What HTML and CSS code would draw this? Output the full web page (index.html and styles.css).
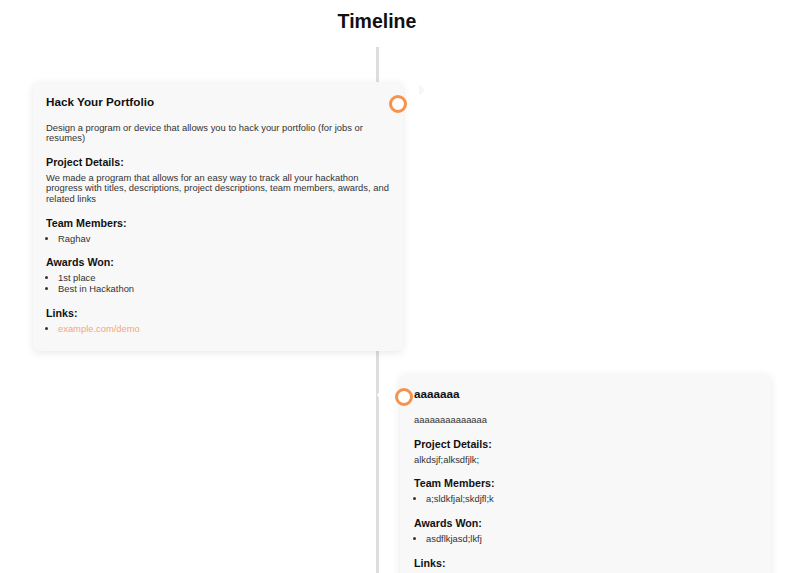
FILE: index.html
```html
<!DOCTYPE html>
<html lang="en">
<head>
  <meta charset="UTF-8">
  <title>Timeline</title>
  <meta name="viewport" content="width=device-width, initial-scale=1.0">
  <link rel="stylesheet" href="styles.css">
</head>
<body>

<h1 class="page-title">Timeline</h1>

<div class="timeline">

  <div class="entry left">
    <span class="dot"></span>
    <h3 class="entry-title">Hack Your Portfolio</h3>
    <p class="entry-desc">Design a program or device that allows you to hack your portfolio (for jobs or resumes)</p>

    <h4>Project Details:</h4>
    <p>We made a program that allows for an easy way to track all your hackathon progress with titles, descriptions, project descriptions, team members, awards, and related links</p>

    <h4>Team Members:</h4>
    <ul>
      <li>Raghav</li>
    </ul>

    <h4>Awards Won:</h4>
    <ul>
      <li>1st place</li>
      <li>Best in Hackathon</li>
    </ul>

    <h4>Links:</h4>
    <ul>
      <li><a href="#">example.com/demo</a></li>
    </ul>
  </div>

  <div class="entry right">
    <span class="dot"></span>
    <h3 class="entry-title">aaaaaaa</h3>
    <p class="entry-desc">aaaaaaaaaaaaaa</p>

    <h4>Project Details:</h4>
    <p>alkdsjf;alksdfjlk;</p>

    <h4>Team Members:</h4>
    <ul>
      <li>a;sldkfjal;skdjfl;k</li>
    </ul>

    <h4>Awards Won:</h4>
    <ul>
      <li>asdflkjasd;lkfj</li>
    </ul>

    <h4>Links:</h4>
    <ul>
      <li><a href="#">example.com/demo</a></li>
    </ul>
  </div>

</div>

</body>
</html>
```

FILE: styles.css
```css
body {
  margin: 0;
  font-family: "Liberation Sans", Arial, sans-serif;
  background: #fff;
  color: #222;
}

.page-title {
  width: 754px;
  margin: 0;
  padding-top: 9px;
  text-align: center;
  font-size: 19.5px;
  line-height: 24px;
  color: #111;
}

.timeline {
  position: relative;
  padding-top: 49px;
  padding-bottom: 40px;
}

/* the vertical rail */
.timeline::before {
  content: "";
  position: absolute;
  top: 14px;
  bottom: 0;
  left: 376px;
  width: 3px;
  background: #ddd;
}

.entry {
  position: relative;
  box-sizing: border-box;
  background: #f8f8f8;
  border-radius: 6px;
  box-shadow: 0 2px 8px rgba(0,0,0,0.09);
  padding: 13px 14px 17px 13px;
}

.entry.left {
  width: 370px;
  margin-left: 33px;
  margin-bottom: 23px;
}

.entry.right {
  width: 371px;
  margin-left: 400px;
  padding-left: 14px;
}

/* little pointers next to each card */
.entry.left::after {
  content: "";
  position: absolute;
  top: 2px;
  right: -28px;
  border: 6px solid transparent;
  border-left: 6px solid #f6f6f6;
}

.entry.right::after {
  content: "";
  position: absolute;
  top: 16px;
  left: -28px;
  border: 5px solid transparent;
  border-right: 4px solid #fff;
}

.dot {
  position: absolute;
  width: 12px;
  height: 12px;
  border: 3px solid #f5924c;
  border-radius: 50%;
  background: #fff;
}

.entry.left .dot {
  top: 13px;
  right: -4px;
}

.entry.right .dot {
  top: 14px;
  left: -5px;
}

.entry-title {
  margin: 0;
  font-size: 11.7px;
  line-height: 14px;
  color: #111;
}

.entry-desc {
  margin-top: 13.5px;
}

h4 {
  margin: 12.5px 0 4px;
  font-size: 10.7px;
  line-height: 13px;
  color: #111;
}

p {
  margin: 0;
  font-size: 9.4px;
  line-height: 10.4px;
  color: #333;
}

ul {
  margin: 1px 0 0;
  padding-left: 12px;
  font-size: 9.4px;
  line-height: 10.4px;
  color: #333;
}

a {
  color: #f7a57a;
  text-decoration: none;
}
```
